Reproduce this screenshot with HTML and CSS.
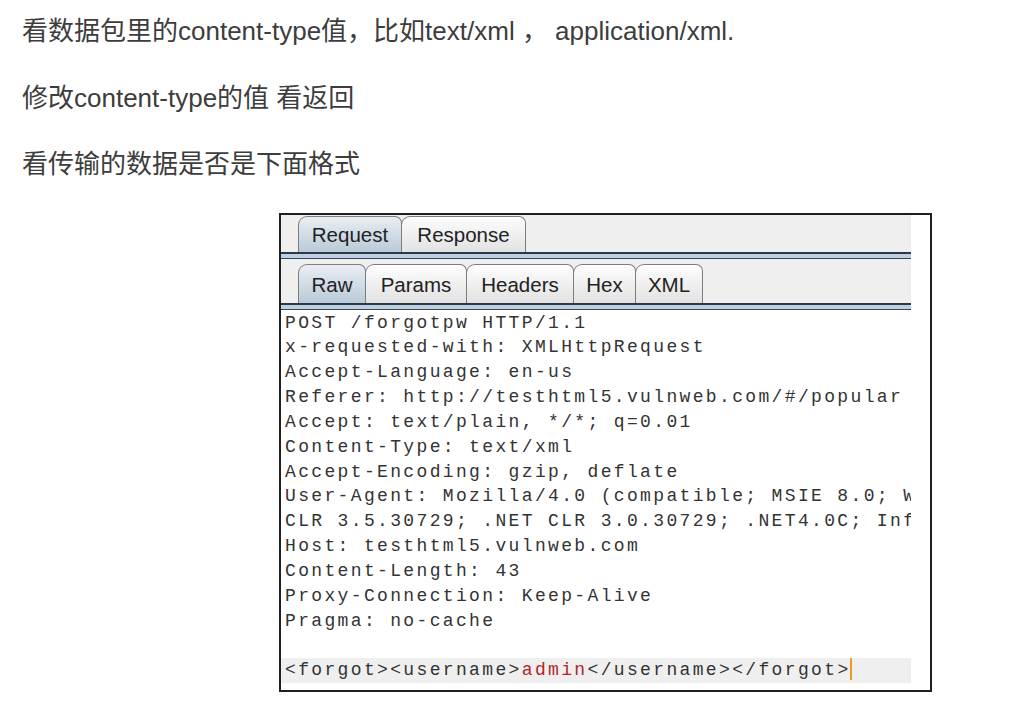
FILE: index.html
```html
<!DOCTYPE html>
<html lang="zh-CN">
<head>
<meta charset="utf-8">
<title>content-type</title>
<link rel="stylesheet" href="styles.css">
</head>
<body>
<div class="article">
  <p class="para">看数据包里的content-type值，比如text/xml ， application/xml.</p>
  <p class="para">修改content-type的值 看返回</p>
  <p class="para">看传输的数据是否是下面格式</p>
  <div class="figure">
    <div class="shot">
      <div class="tabbar tabbar-top">
        <div class="tab active w-request">Request</div>
        <div class="tab w-response">Response</div>
      </div>
      <div class="sep"></div>
      <div class="tabbar tabbar-sub">
        <div class="tab active w-raw">Raw</div>
        <div class="tab w-params">Params</div>
        <div class="tab w-headers">Headers</div>
        <div class="tab w-hex">Hex</div>
        <div class="tab w-xml">XML</div>
      </div>
      <div class="sep"></div>
      <div class="code"><div class="line">POST /forgotpw HTTP/1.1</div><div class="line">x-requested-with: XMLHttpRequest</div><div class="line">Accept-Language: en-us</div><div class="line">Referer: http://testhtml5.vulnweb.com/#/popular</div><div class="line">Accept: text/plain, */*; q=0.01</div><div class="line">Content-Type: text/xml</div><div class="line">Accept-Encoding: gzip, deflate</div><div class="line">User-Agent: Mozilla/4.0 (compatible; MSIE 8.0; Windows NT 6.1; WOW64; Trident/4.0; SLCC2; .NET</div><div class="line">CLR 3.5.30729; .NET CLR 3.0.30729; .NET4.0C; InfoPath.3)</div><div class="line">Host: testhtml5.vulnweb.com</div><div class="line">Content-Length: 43</div><div class="line">Proxy-Connection: Keep-Alive</div><div class="line">Pragma: no-cache</div><div class="line"> </div><div class="line current">&lt;forgot&gt;&lt;username&gt;<span class="val">admin</span>&lt;/username&gt;&lt;/forgot&gt;<span class="caret"></span></div></div>
    </div>
  </div>
</div>
</body>
</html>
```

FILE: styles.css
```css
html, body {
  margin: 0;
  padding: 0;
  background: #ffffff;
}

.article {
  padding: 11px 0 0 22px;
  font-family: "Liberation Sans", "Noto Sans CJK SC", sans-serif;
  color: #3d3d3d;
}

.para {
  margin: 0 0 26.5px 0;
  font-size: 26px;
  line-height: 40px;
}

.figure {
  margin: 28.5px 0 0 257px;
  width: 653px;
  height: 479px;
  box-sizing: border-box;
  border: 2px solid #1f1f1f;
  background: #ffffff;
  overflow: hidden;
}

.shot {
  width: 630px;
  height: 100%;
  overflow: hidden;
  display: flex;
  flex-direction: column;
}

.tabbar {
  display: flex;
  align-items: flex-end;
  background: #efefef;
  padding-left: 17px;
  box-sizing: border-box;
}

.tabbar-top {
  height: 37px;
}

.tabbar-sub {
  height: 44px;
}

.tab {
  font-family: "Liberation Sans", Arial, sans-serif;
  font-size: 20.5px;
  color: #222222;
  box-sizing: border-box;
  border: 1px solid #7d7d7d;
  border-bottom: none;
  border-radius: 9px 7px 0 0;
  background: linear-gradient(#fdfdfd, #e2e2e2);
  display: flex;
  align-items: center;
  justify-content: center;
  margin-right: -1px;
  flex: none;
}

.tabbar-top .tab {
  height: 36px;
  padding-top: 1px;
}

.tabbar-sub .tab {
  height: 39px;
  padding-top: 2px;
}

.w-request { width: 104px; }
.w-response { width: 125px; }
.w-raw { width: 68px; }
.w-params { width: 102px; }
.w-headers { width: 108px; }
.w-hex { width: 63px; }
.w-xml { width: 68px; }

.tab.active {
  background: linear-gradient(#e9eef3, #b9cad9);
}

.sep {
  height: 7px;
  box-sizing: border-box;
  border-top: 2px solid #2f3946;
  border-bottom: 1px solid #3b4656;
  background: #bccfe3;
}

.code {
  flex: 1;
  padding-top: 1px;
  font-family: "Liberation Mono", "Courier New", monospace;
  font-size: 18px;
  letter-spacing: 2.35px;
  line-height: 24.85px;
  color: #333333;
  background: #ffffff;
}

.line {
  white-space: pre;
  padding-left: 4px;
  height: 24.85px;
  overflow: hidden;
}

.line.current {
  background: #efefef;
}

.val {
  color: #b3242a;
}

.caret {
  display: inline-block;
  width: 2px;
  height: 22px;
  background: #f29a1c;
  vertical-align: -5px;
  margin-left: -1px;
}
```
